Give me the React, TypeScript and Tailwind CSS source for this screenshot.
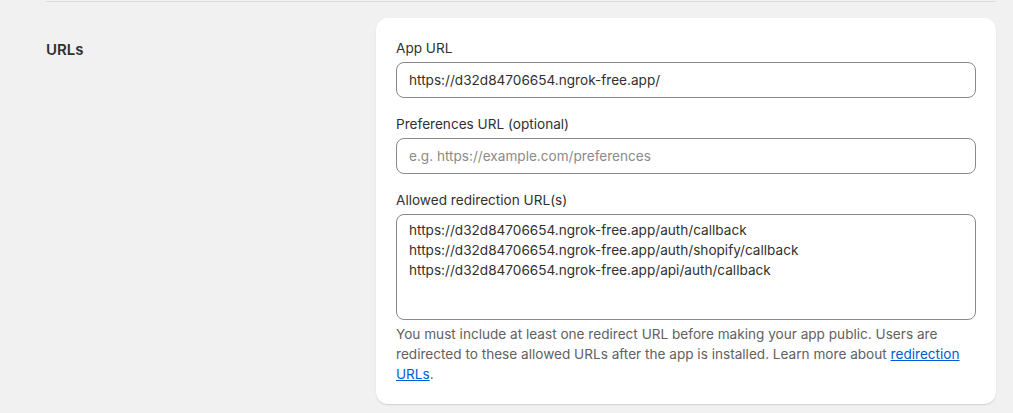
import React from "react";

export default function App() {
  return (
    <div
      className="min-h-[413px] w-full bg-[#f1f1f1] text-[#303030]"
      style={{ fontFamily: "Inter, 'Noto Sans', sans-serif" }}
    >
      <div className="pl-[46px] pr-[17px] pt-px">
        <div className="border-t border-[#dcdcdc]" />
        <div className="flex pt-[16px]">
          <div className="w-[330px] shrink-0 pt-[22px]">
            <h2 className="text-[15px] leading-[20px] font-semibold text-[#303030]">URLs</h2>
          </div>
          <div className="flex-1 rounded-[12px] bg-white p-[20px] shadow-[0_1px_0_0_rgba(26,26,26,0.07),0_1px_2px_0_rgba(0,0,0,0.08)]">
            <div className="flex flex-col gap-[16px] text-[13.6px] leading-[20px]">
              <div className="flex flex-col gap-[4px]">
                <label className="text-[#303030]">App URL</label>
                <input
                  readOnly
                  value="https://d32d84706654.ngrok-free.app/"
                  className="h-[36px] w-full rounded-[8px] border border-[#8a8a8a] bg-white px-[12px] text-[13.6px] text-[#303030] outline-none"
                />
              </div>
              <div className="flex flex-col gap-[4px]">
                <label className="text-[#303030]">Preferences URL (optional)</label>
                <input
                  readOnly
                  placeholder="e.g. https://example.com/preferences"
                  className="h-[36px] w-full rounded-[8px] border border-[#8a8a8a] bg-white px-[12px] text-[13.6px] text-[#303030] outline-none placeholder:text-[#8a8a8a]"
                />
              </div>
              <div className="flex flex-col gap-[4px]">
                <label className="text-[#303030]">Allowed redirection URL(s)</label>
                <textarea
                  readOnly
                  value={
                    "https://d32d84706654.ngrok-free.app/auth/callback\nhttps://d32d84706654.ngrok-free.app/auth/shopify/callback\nhttps://d32d84706654.ngrok-free.app/api/auth/callback"
                  }
                  className="h-[106px] w-full resize-none rounded-[8px] border border-[#8a8a8a] bg-white px-[12px] py-[5px] text-[13.6px] leading-[20px] text-[#303030] outline-none"
                />
                <p className="text-[#616161]">
                  You must include at least one redirect URL before making your app public. Users are
                  redirected to these allowed URLs after the app is installed. Learn more about{" "}
                  <a className="text-[#005bd3] underline" href="#">
                    redirection URLs
                  </a>
                  .
                </p>
              </div>
            </div>
          </div>
        </div>
      </div>
    </div>
  );
}
